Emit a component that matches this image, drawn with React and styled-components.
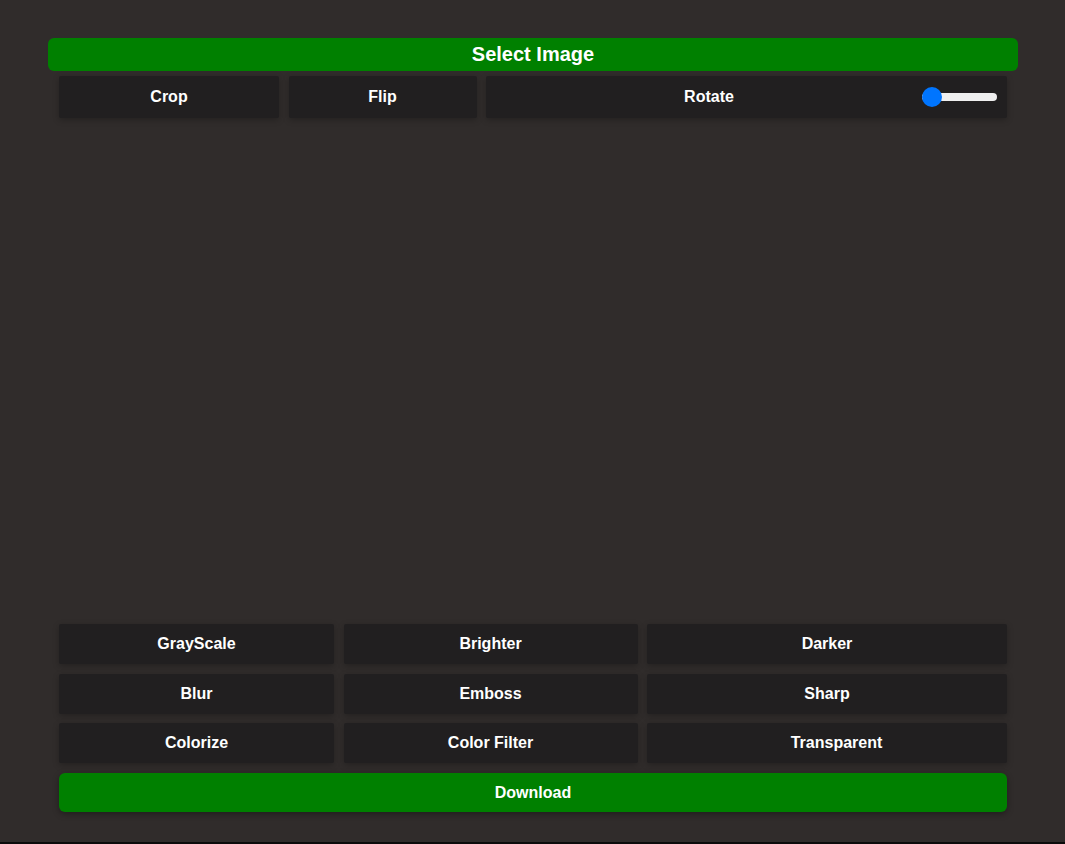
import React, { useState } from "react";
import styled, { createGlobalStyle } from "styled-components";

const GlobalStyle = createGlobalStyle`
  html, body {
    margin: 0;
    padding: 0;
    background: #0b0b0b;
  }
  body {
    font-family: "Liberation Sans", Arial, sans-serif;
  }
`;

const Page = styled.div`
  height: 842px;
  background: #302c2b;
  padding-top: 38px;
  box-sizing: border-box;
`;

const Editor = styled.div`
  width: 970px;
  margin-left: 48px;
  display: flex;
  flex-direction: column;
`;

const SelectButton = styled.button`
  height: 33px;
  width: 100%;
  border: none;
  border-radius: 6px;
  background: #008000;
  color: #fff;
  font-family: inherit;
  font-weight: bold;
  font-size: 20px;
  cursor: pointer;
`;

const Inner = styled.div`
  width: 948px;
  margin: 0 auto;
  display: flex;
  flex-direction: column;
`;

const ToolRow = styled.div`
  display: grid;
  grid-template-columns: 220px 188px 521px;
  column-gap: 9.5px;
  margin-top: 5px;
`;

const Tool = styled.button`
  height: 42px;
  border: none;
  border-radius: 2px;
  background: #211f20;
  color: #fff;
  font-family: inherit;
  font-weight: bold;
  font-size: 16px;
  box-shadow: 0 2px 6px rgba(0, 0, 0, 0.25);
  display: flex;
  align-items: center;
  justify-content: center;
  padding: 0;
  cursor: pointer;
`;

const RotateTool = styled(Tool)`
  justify-content: space-between;
  padding: 0 10px 0 0;
`;

const RotateLabel = styled.span`
  flex: 1;
  text-align: center;
  padding-left: 10px;
`;

const Slider = styled.input`
  -webkit-appearance: none;
  appearance: none;
  width: 75px;
  height: 8px;
  margin: 0;
  border-radius: 4px;
  background: #efefef;
  outline: none;

  &::-webkit-slider-thumb {
    -webkit-appearance: none;
    width: 20px;
    height: 20px;
    border-radius: 50%;
    background: #0075ff;
    border: none;
  }
`;

const Canvas = styled.div`
  height: 506px;
`;

const FilterGrid = styled.div`
  display: grid;
  grid-template-columns: 275px 294px 360px;
  column-gap: 9.5px;
  row-gap: 9.5px;
`;

const FilterButton = styled(Tool)`
  height: 40px;
  padding-left: ${(p) => p.$shift || 0}px;
`;

const Download = styled.button`
  margin-top: 10px;
  height: 39px;
  border: none;
  border-radius: 6px;
  background: #008000;
  color: #fff;
  font-family: inherit;
  font-weight: bold;
  font-size: 16px;
  box-shadow: 0 2px 6px rgba(0, 0, 0, 0.35);
  cursor: pointer;
`;

const filters = [
  { name: "GrayScale" },
  { name: "Brighter" },
  { name: "Darker" },
  { name: "Blur" },
  { name: "Emboss" },
  { name: "Sharp" },
  { name: "Colorize" },
  { name: "Color Filter" },
  { name: "Transparent", shift: 19 },
];

const App = () => {
  const [angle, setAngle] = useState(0);

  return (
    <Page>
      <GlobalStyle />
      <Editor>
        <SelectButton>Select Image</SelectButton>
        <Inner>
          <ToolRow>
            <Tool>Crop</Tool>
            <Tool>Flip</Tool>
            <RotateTool as="div">
              <RotateLabel>Rotate</RotateLabel>
              <Slider
                type="range"
                min="0"
                max="360"
                value={angle}
                onChange={(e) => setAngle(e.target.value)}
              />
            </RotateTool>
          </ToolRow>
          <Canvas />
          <FilterGrid>
            {filters.map((f) => (
              <FilterButton key={f.name} $shift={f.shift}>
                {f.name}
              </FilterButton>
            ))}
          </FilterGrid>
          <Download>Download</Download>
        </Inner>
      </Editor>
    </Page>
  );
};

export default App;
